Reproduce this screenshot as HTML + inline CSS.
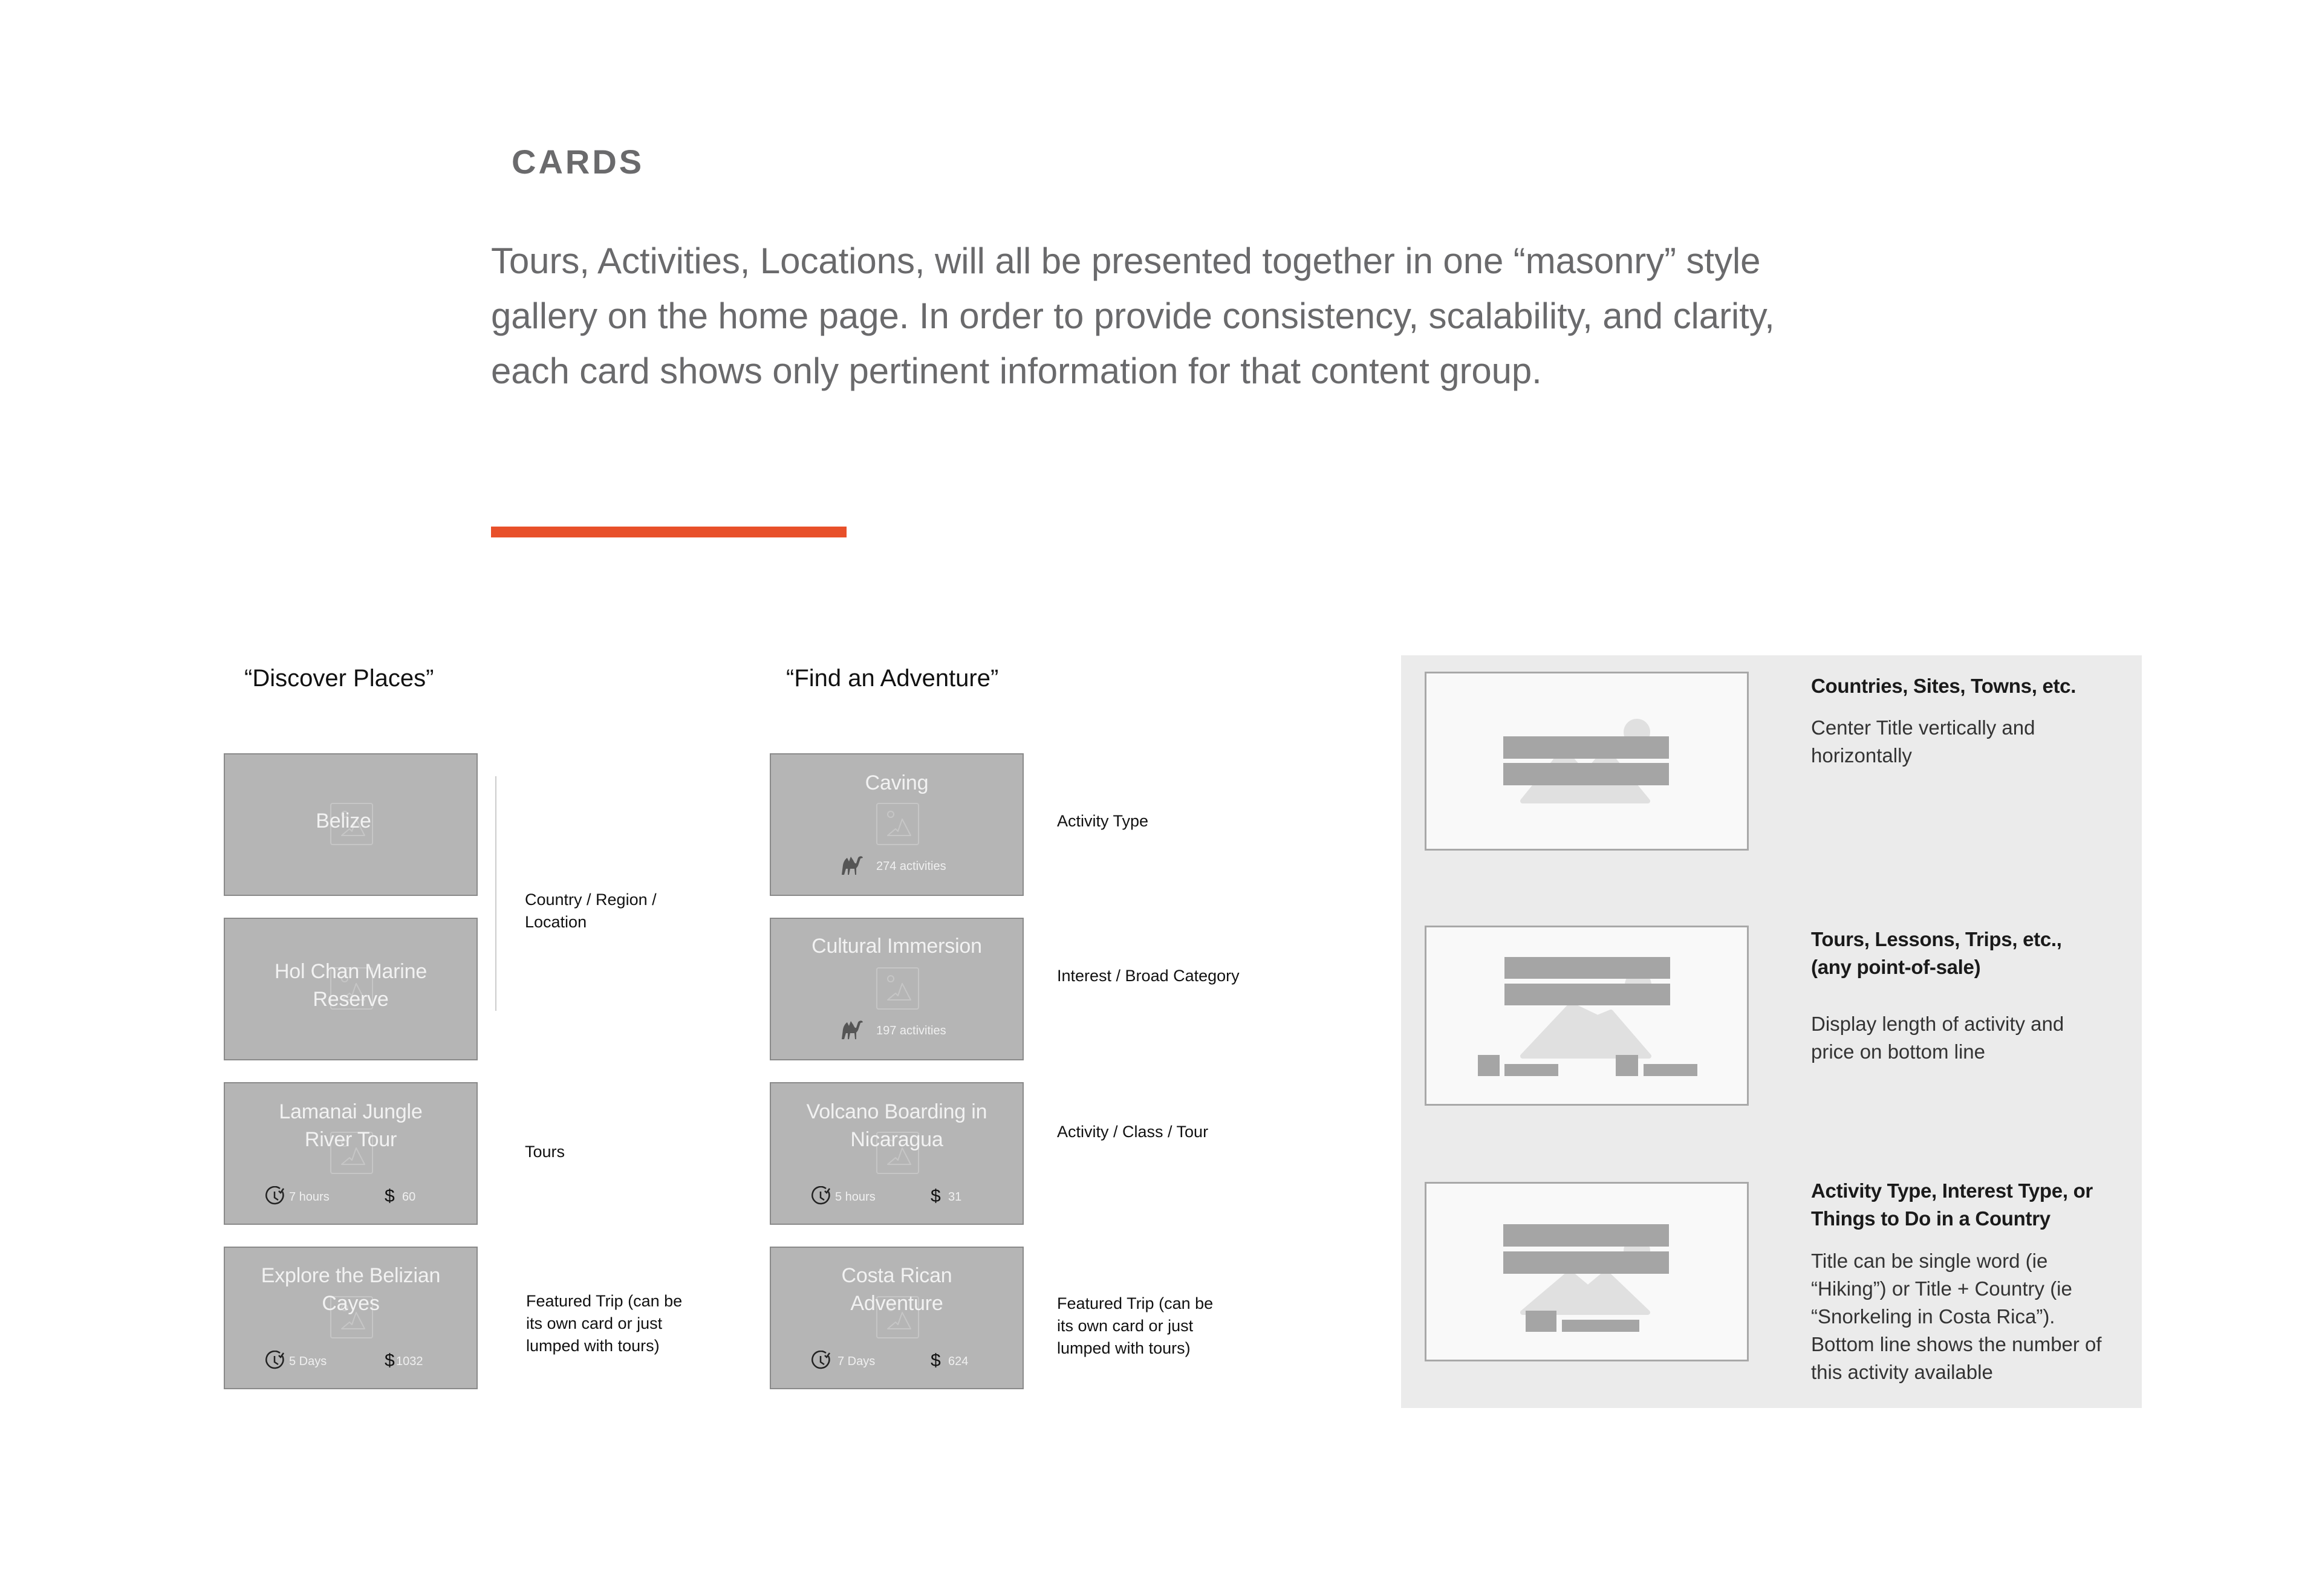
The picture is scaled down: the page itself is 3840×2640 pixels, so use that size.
<!DOCTYPE html>
<html><head><meta charset="utf-8"><style>
*{margin:0;padding:0;box-sizing:border-box}
body{width:3840px;height:2640px;background:#fff;position:relative;overflow:hidden;font-family:"Liberation Sans",sans-serif}
.a{position:absolute;white-space:nowrap}
.card{position:absolute;width:420px;height:236px;background:#b5b5b5;border:2px solid #8a8a8a}
.t{position:absolute;left:0;width:100%;text-align:center;color:#f2f2f2;font-size:34px;line-height:46px;height:46px;letter-spacing:-0.2px}
.ic{position:absolute;left:174px;top:80px}
.sm{position:absolute;color:#f0f0f0;font-size:20px;line-height:24px}
.lab{position:absolute;font-size:27px;color:#111;line-height:37px;white-space:nowrap}
.rt{position:absolute;left:2995px;font-size:33px;line-height:46px;color:#333;white-space:nowrap}
.rb{color:#1a1a1a;font-weight:bold;letter-spacing:-0.3px}
</style></head><body>
<div class="a" style="left:846px;top:238px;font-size:56px;font-weight:bold;color:#6a6a6c;letter-spacing:4px;line-height:60px">CARDS</div>
<div class="a" style="left:812px;top:386px;font-size:60px;line-height:91px;color:#6a6a6c;letter-spacing:-0.1px">Tours, Activities, Locations, will all be presented together in one “masonry” style<br>gallery on the home page. In order to provide consistency, scalability, and clarity,<br>each card shows only pertinent information for that content group.</div>
<div class="a" style="left:812px;top:871px;width:588px;height:18px;background:#e8502a"></div>

<div class="a" style="left:404px;top:1098px;font-size:40px;line-height:48px;color:#111">“Discover Places”</div>
<div class="a" style="left:1300px;top:1098px;font-size:40px;line-height:48px;color:#111">“Find an Adventure”</div>

<svg width="0" height="0" style="position:absolute"><defs>
<g id="ph"><rect x="1" y="1" width="69" height="68" rx="3" fill="none" stroke="#c6c6c6" stroke-width="2"/><circle cx="24" cy="19" r="5" fill="none" stroke="#c6c6c6" stroke-width="2"/><path d="M19 54 L32 43 L36 47 L43 27 L57 54 Z" fill="none" stroke="#c6c6c6" stroke-width="2" stroke-linejoin="round"/></g>
<g id="clk"><path d="M25 4 A14 14 0 1 0 29 9" fill="none" stroke="#222" stroke-width="2.5"/><path d="M16 9 V19 L22 23" fill="none" stroke="#222" stroke-width="2.5"/><path d="M23 8 L26 11 L31 4" fill="none" stroke="#222" stroke-width="2.5"/></g>
<g id="cam"><path d="M3 34 L5 18 C6 12 9 8 12 6 L15 12 L18 4 L22 10 C24 14 25 16 27 15 L30 6 C32 3 35 3 37 4 L38 6 L34 7 L31 16 C30 20 28 22 27 23 L27 34 L25 34 L24 24 L17 24 L15 34 L13 34 L13 24 L10 24 L7 34 Z" fill="#555"/></g>
</defs></svg>

<div class="card" style="left:370px;top:1246px">
<svg class="ic" width="71" height="70"><use href="#ph"/></svg>
<div class="t" style="top:87px;left:-12px">Belize</div></div>
<div class="card" style="left:370px;top:1518px">
<svg class="ic" width="71" height="70"><use href="#ph"/></svg>
<div class="t" style="top:64px">Hol Chan Marine</div><div class="t" style="top:110px">Reserve</div></div>
<div class="card" style="left:370px;top:1790px">
<svg class="ic" width="71" height="70"><use href="#ph"/></svg>
<div class="t" style="top:24px">Lamanai Jungle</div><div class="t" style="top:70px">River Tour</div>
<svg style="position:absolute;left:66px;top:170px" width="34" height="34"><use href="#clk"/></svg>
<div class="sm" style="left:106px;top:176px">7 hours</div>
<div class="sm" style="left:264px;top:170px;font-size:30px;line-height:34px;color:#111">$</div>
<div class="sm" style="left:293px;top:176px">60</div></div>
<div class="card" style="left:370px;top:2062px">
<svg class="ic" width="71" height="70"><use href="#ph"/></svg>
<div class="t" style="top:23px">Explore the Belizian</div><div class="t" style="top:69px">Cayes</div>
<svg style="position:absolute;left:66px;top:170px" width="34" height="34"><use href="#clk"/></svg>
<div class="sm" style="left:106px;top:176px">5 Days</div>
<div class="sm" style="left:264px;top:170px;font-size:30px;line-height:34px;color:#111">$</div>
<div class="sm" style="left:283px;top:176px">1032</div></div>

<div class="a" style="left:819px;top:1284px;width:2px;height:388px;background:#ccc"></div>
<div class="lab" style="left:868px;top:1470px">Country / Region /<br>Location</div>
<div class="lab" style="left:868px;top:1887px">Tours</div>
<div class="lab" style="left:870px;top:2134px">Featured Trip (can be<br>its own card or just<br>lumped with tours)</div>

<div class="card" style="left:1273px;top:1246px">
<svg class="ic" width="71" height="70"><use href="#ph"/></svg>
<div class="t" style="top:24px">Caving</div>
<svg style="position:absolute;left:114px;top:165px" width="40" height="36"><use href="#cam"/></svg>
<div class="sm" style="left:174px;top:173px">274 activities</div></div>
<div class="card" style="left:1273px;top:1518px">
<svg class="ic" width="71" height="70"><use href="#ph"/></svg>
<div class="t" style="top:22px">Cultural Immersion</div>
<svg style="position:absolute;left:114px;top:165px" width="40" height="36"><use href="#cam"/></svg>
<div class="sm" style="left:174px;top:173px">197 activities</div></div>
<div class="card" style="left:1273px;top:1790px">
<svg class="ic" width="71" height="70"><use href="#ph"/></svg>
<div class="t" style="top:24px">Volcano Boarding in</div><div class="t" style="top:70px">Nicaragua</div>
<svg style="position:absolute;left:66px;top:170px" width="34" height="34"><use href="#clk"/></svg>
<div class="sm" style="left:106px;top:176px">5 hours</div>
<div class="sm" style="left:264px;top:170px;font-size:30px;line-height:34px;color:#111">$</div>
<div class="sm" style="left:293px;top:176px">31</div></div>
<div class="card" style="left:1273px;top:2062px">
<svg class="ic" width="71" height="70"><use href="#ph"/></svg>
<div class="t" style="top:23px">Costa Rican</div><div class="t" style="top:69px">Adventure</div>
<svg style="position:absolute;left:66px;top:170px" width="34" height="34"><use href="#clk"/></svg>
<div class="sm" style="left:110px;top:176px">7 Days</div>
<div class="sm" style="left:264px;top:170px;font-size:30px;line-height:34px;color:#111">$</div>
<div class="sm" style="left:293px;top:176px">624</div></div>

<div class="lab" style="left:1748px;top:1340px">Activity Type</div>
<div class="lab" style="left:1748px;top:1596px">Interest / Broad Category</div>
<div class="lab" style="left:1748px;top:1854px">Activity / Class / Tour</div>
<div class="lab" style="left:1748px;top:2138px">Featured Trip (can be<br>its own card or just<br>lumped with tours)</div>

<div class="a" style="left:2317px;top:1084px;width:1225px;height:1245px;background:#ebebeb"></div>
<svg class="a" style="left:2356px;top:1111px" width="536" height="296">
<rect x="1.5" y="1.5" width="533" height="293" fill="#f9f9f9" stroke="#a8a8a8" stroke-width="3"/>
<circle cx="351" cy="100" r="22" fill="#e0e0e0"/>
<path d="M162 214 L230 130 L265 170 L300 130 L369 214 Z" fill="#e0e0e0" stroke="#e0e0e0" stroke-width="8" stroke-linejoin="round"/>
<rect x="130" y="107" width="274" height="37" fill="#a5a5a5"/><rect x="130" y="151" width="274" height="37" fill="#a5a5a5"/>
</svg>
<svg class="a" style="left:2356px;top:1531px" width="536" height="298">
<rect x="1.5" y="1.5" width="533" height="295" fill="#f9f9f9" stroke="#a8a8a8" stroke-width="3"/>
<circle cx="353" cy="98" r="22" fill="#e0e0e0"/>
<path d="M162 216 L242 131 L286 152 L308 143 L371 216 Z" fill="#e0e0e0" stroke="#e0e0e0" stroke-width="8" stroke-linejoin="round"/>
<rect x="132" y="52" width="274" height="36" fill="#a5a5a5"/><rect x="132" y="96" width="274" height="36" fill="#a5a5a5"/>
<rect x="88" y="214" width="36" height="35" fill="#a5a5a5"/><rect x="132" y="229" width="89" height="20" fill="#a5a5a5"/>
<rect x="316" y="214" width="37" height="35" fill="#a5a5a5"/><rect x="362" y="229" width="89" height="20" fill="#a5a5a5"/>
</svg>
<svg class="a" style="left:2356px;top:1955px" width="536" height="297">
<rect x="1.5" y="1.5" width="533" height="294" fill="#f9f9f9" stroke="#a8a8a8" stroke-width="3"/>
<circle cx="351" cy="114" r="22" fill="#e0e0e0"/>
<path d="M162 216 L240 150 L270 175 L300 150 L369 216 Z" fill="#e0e0e0" stroke="#e0e0e0" stroke-width="8" stroke-linejoin="round"/>
<rect x="130" y="70" width="274" height="37" fill="#a5a5a5"/><rect x="130" y="115" width="274" height="37" fill="#a5a5a5"/>
<rect x="167" y="213" width="51" height="35" fill="#a5a5a5"/><rect x="227" y="228" width="128" height="20" fill="#a5a5a5"/>
</svg>

<div class="rt rb" style="top:1112px">Countries, Sites, Towns, etc.</div>
<div class="rt" style="top:1181px">Center Title vertically and<br>horizontally</div>
<div class="rt rb" style="top:1531px">Tours, Lessons, Trips, etc.,<br>(any point-of-sale)</div>
<div class="rt" style="top:1671px">Display length of activity and<br>price on bottom line</div>
<div class="rt rb" style="top:1947px">Activity Type, Interest Type, or<br>Things to Do in a Country</div>
<div class="rt" style="top:2063px">Title can be single word (ie<br>“Hiking”) or Title + Country (ie<br>“Snorkeling in Costa Rica”).<br>Bottom line shows the number of<br>this activity available</div>
</body></html>
